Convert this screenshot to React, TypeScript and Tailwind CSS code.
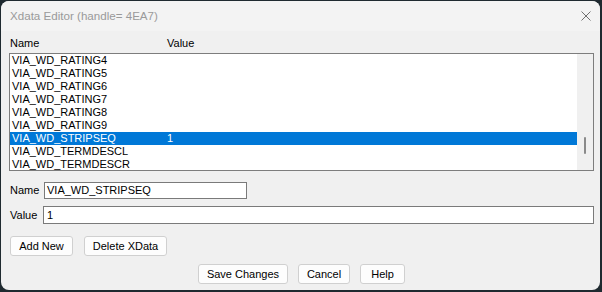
import React from 'react';

const ROWS = [
  { name: 'VIA_WD_RATING4', value: '' },
  { name: 'VIA_WD_RATING5', value: '' },
  { name: 'VIA_WD_RATING6', value: '' },
  { name: 'VIA_WD_RATING7', value: '' },
  { name: 'VIA_WD_RATING8', value: '' },
  { name: 'VIA_WD_RATING9', value: '' },
  { name: 'VIA_WD_STRIPSEQ', value: '1' },
  { name: 'VIA_WD_TERMDESCL', value: '' },
  { name: 'VIA_WD_TERMDESCR', value: '' },
];

const SELECTED = 'VIA_WD_STRIPSEQ';

function WinButton({ label, width }: { label: string; width: string }) {
  return (
    <button
      type="button"
      className={`${width} h-[20px] bg-[#fdfdfd] border border-[#d0d0d0] rounded-[3px] text-[11px] leading-[18px] text-black`}
    >
      {label}
    </button>
  );
}

export default function App() {
  return (
    <div
      className="w-[602px] h-[292px] bg-[#1f2a30] pt-[1px] pl-[1px] overflow-hidden"
      style={{ fontFamily: '"Liberation Sans", Arial, sans-serif' }}
    >
      <div className="w-[599px] h-[289px] bg-[#f0f0f0] rounded-[8px] overflow-hidden flex flex-col">
        {/* Title bar */}
        <div className="h-[30px] bg-[#f3f3f3] flex items-center justify-between pl-[9px] pr-[9px] shrink-0">
          <span className="text-[11.6px] text-[#9a9a9a] leading-[14px]">Xdata Editor (handle= 4EA7)</span>
          <svg width="10" height="10" viewBox="0 0 10 10">
            <path d="M0.5 0.5 L9.5 9.5 M9.5 0.5 L0.5 9.5" stroke="#707070" strokeWidth="1" fill="none" />
          </svg>
        </div>

        <div className="pl-[8px] pr-[6px] text-[11px] text-black">
          {/* Column header */}
          <div className="mt-[6px] h-[13px] leading-[13px] flex">
            <div className="w-[158px] pl-[1px]">Name</div>
            <div>Value</div>
          </div>

          {/* List box */}
          <div className="mt-[3px] h-[118px] border border-[#7d7d7d] bg-white flex">
            <div className="w-[568px]">
              {ROWS.map((row) => {
                const sel = row.name === SELECTED;
                return (
                  <div
                    key={row.name}
                    className={`h-[13px] leading-[13px] flex pl-[2px] ${sel ? 'bg-[#0078d7] text-white' : 'text-black'}`}
                  >
                    <div className="w-[155px]">{row.name}</div>
                    <div>{row.value}</div>
                  </div>
                );
              })}
            </div>
            <div className="w-[16px] bg-[#f0f0f0] relative">
              <div className="absolute left-[7px] top-[83px] w-[2px] h-[17px] bg-[#8a8a8a] rounded-full" />
            </div>
          </div>

          {/* Name field */}
          <div className="mt-[11px] flex items-center">
            <div className="w-[35px] pl-[1px]">Name</div>
            <div className="w-[203px] h-[17px] border border-[#7a7a7a] bg-white pl-[2px] leading-[15px]">
              VIA_WD_STRIPSEQ
            </div>
          </div>

          {/* Value field */}
          <div className="mt-[7px] flex items-center">
            <div className="w-[34px] pl-[1px]">Value</div>
            <div className="flex-1 h-[18px] border border-[#7a7a7a] bg-white pl-[3px] leading-[16px]">1</div>
          </div>

          {/* Add / Delete */}
          <div className="mt-[12px] flex gap-[11px] pl-[1px]">
            <WinButton label="Add New" width="w-[63px]" />
            <WinButton label="Delete XData" width="w-[83px]" />
          </div>
        </div>

        {/* Bottom buttons */}
        <div className="mt-[8px] flex justify-center gap-[10px] pl-[2px]">
          <WinButton label="Save Changes" width="w-[90px]" />
          <WinButton label="Cancel" width="w-[52px]" />
          <WinButton label="Help" width="w-[45px]" />
        </div>
      </div>
    </div>
  );
}
